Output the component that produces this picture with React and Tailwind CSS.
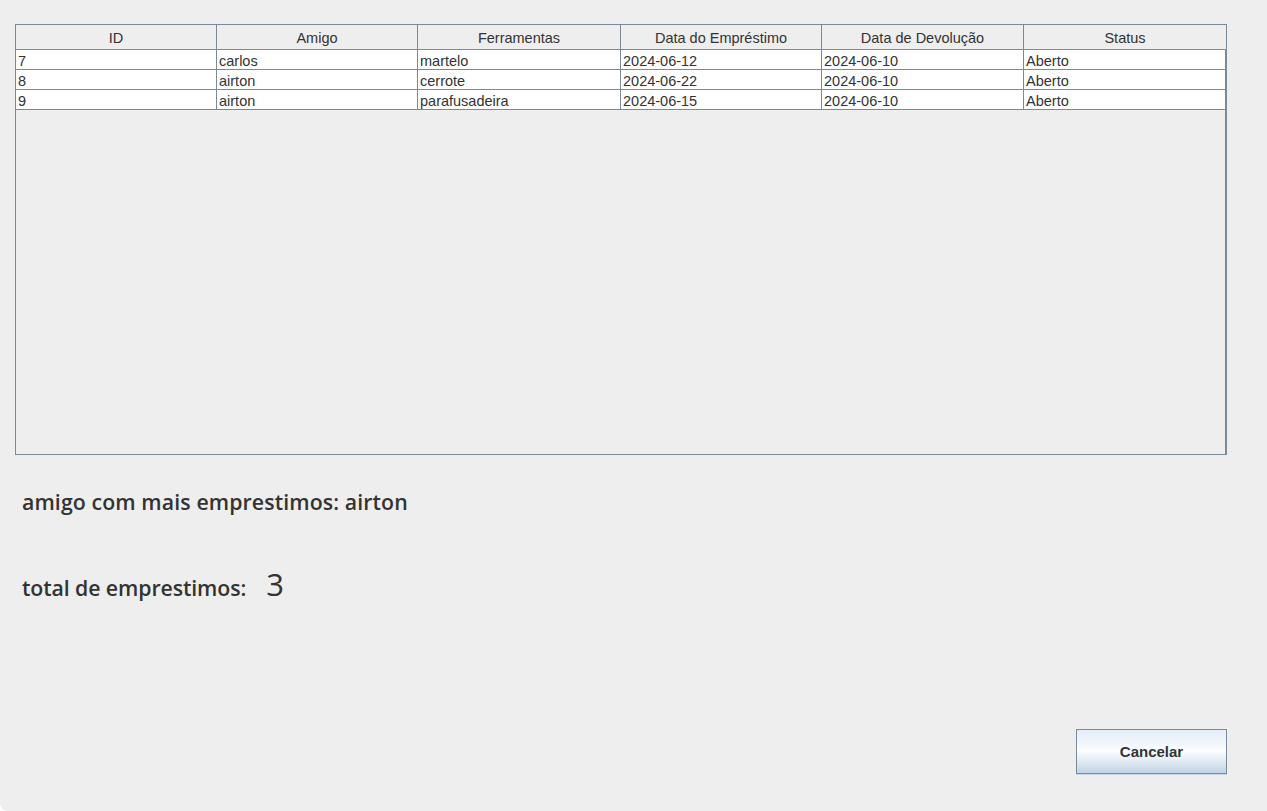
import React from "react";

const cols = ["ID", "Amigo", "Ferramentas", "Data do Empréstimo", "Data de Devolução", "Status"];
const rows = [
  ["7", "carlos", "martelo", "2024-06-12", "2024-06-10", "Aberto"],
  ["8", "airton", "cerrote", "2024-06-22", "2024-06-10", "Aberto"],
  ["9", "airton", "parafusadeira", "2024-06-15", "2024-06-10", "Aberto"],
];
const widths = ["w-[201px]", "w-[201px]", "w-[203px]", "w-[201px]", "w-[202px]", "w-[202px]"];

export default function App() {
  return (
    <div className="w-[1267px] h-[811px] bg-[#eeeeee] flex flex-col overflow-hidden rounded-bl-[8px]" style={{ fontFamily: '"Liberation Sans", Arial, sans-serif' }}>
      <div className="pt-[24px] pl-[15px]">
        <div className="w-[1212px] h-[431px] border border-[#7a8a99] border-r-2 bg-[#eeeeee] flex flex-col">
          <div className="flex h-[25px] border-b border-[#7a8a99]">
            {cols.map((c, i) => (
              <div
                key={c}
                className={`${widths[i]} shrink-0 flex items-center justify-center pt-[4px] text-[14.5px] text-[#333333] bg-[#eeeeee] ${i < 5 ? "border-r border-[#7a8a99]" : ""}`}
              >
                {c}
              </div>
            ))}
          </div>
          {rows.map((r, ri) => (
            <div key={ri} className="flex h-[20px] border-b border-[#7a8a99] bg-white">
              {r.map((v, i) => (
                <div
                  key={i}
                  className={`${widths[i]} shrink-0 flex items-center pl-[2px] pt-[3px] text-[14.5px] leading-none text-[#333333] ${i < 5 ? "border-r border-[#7a8a99]" : ""}`}
                >
                  {v}
                </div>
              ))}
            </div>
          ))}
        </div>
      </div>

      <div className="pl-[22px] pt-[33px] text-[#333333]" style={{ fontFamily: '"Open Sans", "Noto Sans", sans-serif' }}>
        <div className="text-[21.3px] font-semibold leading-[28px] tracking-[0.1px]">amigo com mais emprestimos: airton</div>
        <div className="mt-[53px] flex items-baseline">
          <span className="text-[21.3px] font-semibold tracking-[-0.1px]">total de emprestimos:</span>
          <span className="ml-[20px] text-[31px] font-medium leading-none">3</span>
        </div>
      </div>

      <div className="flex-1" />
      <div className="flex justify-end pr-[40px] pb-[37px]">
        <button className="w-[151px] h-[45px] pt-[2px] border border-[#7a8a99] bg-gradient-to-b from-[#e4edf8] via-[#fbfdff] to-[#c2d4e6] text-[15px] font-bold text-[#333333] shadow-[0_1px_0_#c9d8e8]">
          Cancelar
        </button>
      </div>
    </div>
  );
}
